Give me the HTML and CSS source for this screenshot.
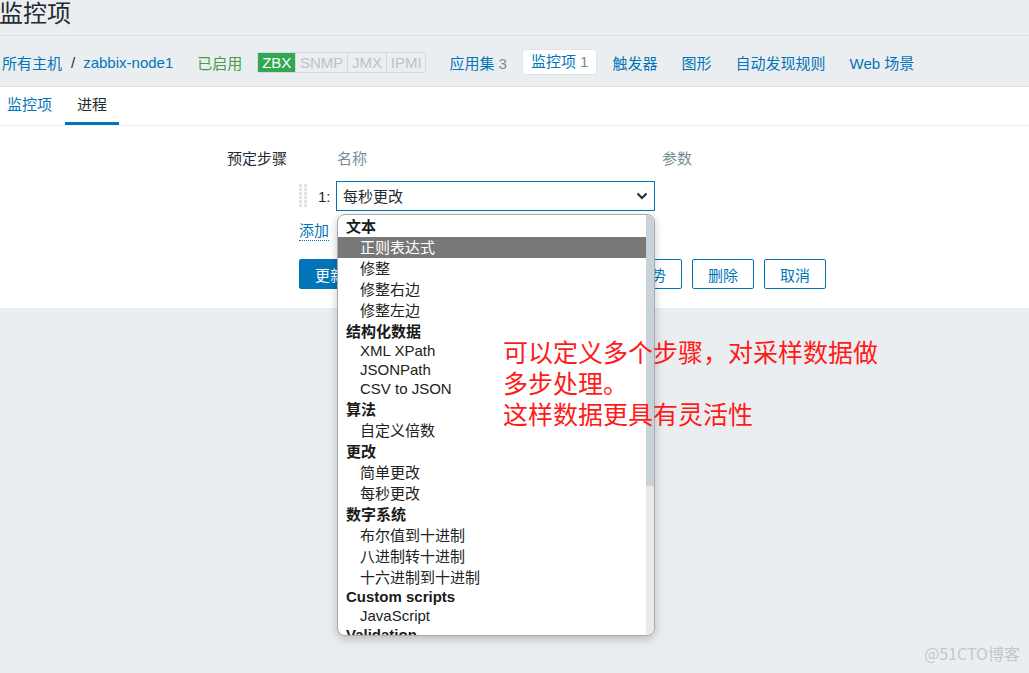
FILE: index.html
```html
<!DOCTYPE html>
<html lang="zh-CN">
<head>
<meta charset="utf-8">
<title>监控项</title>
<link rel="stylesheet" href="styles.css">
</head>
<body>
<header class="page-header"><h1 class="title">监控项</h1></header>
<nav class="host-nav">
  <a class="link">所有主机</a><span class="sep">/</span><a class="link">zabbix-node1</a>
  <span class="status">已启用</span>
  <span class="tags"><span class="tag on">ZBX</span><span class="tag">SNMP</span><span class="tag">JMX</span><span class="tag">IPMI</span></span>
  <a class="link apps">应用集 <span class="count">3</span></a>
  <span class="current"><a class="link">监控项</a> <span class="count">1</span></span>
  <a class="link after-current">触发器</a>
  <a class="link spaced">图形</a>
  <a class="link spaced">自动发现规则</a>
  <a class="link spaced">Web 场景</a>
</nav>
<main class="panel">
  <div class="tabs"><a class="tab">监控项</a><a class="tab active">进程</a></div>
  <div class="form">
    <div class="label">预定步骤</div>
    <div class="field">
      <div class="steps">
        <span></span><span></span><span class="col-head name">名称</span><span class="col-head params">参数</span>
        <span class="handle"><svg width="8" height="24" viewBox="0 0 8 24"><g fill="#dfe3e7"><rect x="0" y="0" width="3" height="3"/><rect x="5" y="0" width="3" height="3"/><rect x="0" y="4" width="3" height="3"/><rect x="5" y="4" width="3" height="3"/><rect x="0" y="8" width="3" height="3"/><rect x="5" y="8" width="3" height="3"/><rect x="0" y="12" width="3" height="3"/><rect x="5" y="12" width="3" height="3"/><rect x="0" y="16" width="3" height="3"/><rect x="5" y="16" width="3" height="3"/><rect x="0" y="20" width="3" height="3"/><rect x="5" y="20" width="3" height="3"/></g></svg></span>
        <span class="num">1:</span>
        <div class="select-wrap">
          <div class="select"><span>每秒更改</span><svg class="chev" width="12" height="8" viewBox="0 0 12 8"><polyline points="1.5,1.5 6,6 10.5,1.5" fill="none" stroke="#1f2c33" stroke-width="2"/></svg></div>
          <div class="dropdown">
            <div class="list">
              <div class="opt grp">文本</div>
              <div class="opt sel">正则表达式</div>
              <div class="opt">修整</div>
              <div class="opt">修整右边</div>
              <div class="opt">修整左边</div>
              <div class="opt grp">结构化数据</div>
              <div class="opt lat">XML XPath</div>
              <div class="opt lat">JSONPath</div>
              <div class="opt lat">CSV to JSON</div>
              <div class="opt grp">算法</div>
              <div class="opt">自定义倍数</div>
              <div class="opt grp">更改</div>
              <div class="opt">简单更改</div>
              <div class="opt">每秒更改</div>
              <div class="opt grp">数字系统</div>
              <div class="opt">布尔值到十进制</div>
              <div class="opt">八进制转十进制</div>
              <div class="opt">十六进制到十进制</div>
              <div class="opt grp lat">Custom scripts</div>
              <div class="opt lat">JavaScript</div>
              <div class="opt grp lat">Validation</div>
              <div class="opt lat">In range</div>
            </div>
            <div class="scrollbar"><div class="thumb"></div></div>
          </div>
        </div>
        <span></span>
      </div>
      <div class="add-row"><a class="add">添加</a></div>
      <div class="buttons">
        <button class="btn primary">更新</button>
        <button class="btn">克隆</button>
        <button class="btn">现在检查</button>
        <button class="btn">清除历史和趋势</button>
        <button class="btn">删除</button>
        <button class="btn">取消</button>
      </div>
    </div>
  </div>
</main>
<div class="annotation">可以定义多个步骤，对采样数据做<br>多步处理。<br>这样数据更具有灵活性</div>
<div class="watermark">@51CTO博客</div>
</body>
</html>
```

FILE: styles.css
```css
* { box-sizing: border-box; }
html, body { margin: 0; padding: 0; }
body {
  background: #ebeef1;
  font-family: "Liberation Sans", "Noto Sans CJK SC", sans-serif;
  font-size: 15px;
  color: #1f2c33;
  height: 673px;
  overflow: hidden;
  position: relative;
}
a { color: #0275b8; text-decoration: none; }

.page-header {
  height: 36px;
  border-bottom: 1px solid #dce1e5;
}
.title {
  margin: 0;
  font-size: 24px;
  font-weight: normal;
  line-height: 28px;
  color: #1f2c33;
  margin-left: -1px;
}

.host-nav {
  height: 51px;
  display: flex;
  align-items: center;
  padding-left: 2px;
  padding-top: 2px;
  border-bottom: 1px solid #dce1e5;
  white-space: nowrap;
}
.sep { margin: 0 8px 0 9px; color: #1f2c33; }
.status { color: #429e47; margin-left: 24px; }
.tags {
  display: flex;
  margin-left: 15px;
  border: 1px solid #d6dadd;
  border-radius: 2px;
  height: 21px;
}
.tag {
  padding: 0 3.85px;
  line-height: 19px;
  color: #bcc3c8;
  border-left: 1px solid #d6dadd;
}
.tag:first-child { border-left: 0; }
.tag.on { background: #33a852; color: #fff; }
.apps { margin-left: 23px; }
.count { color: #768d99; }
.current {
  margin-left: 15px;
  padding: 0 8px;
  height: 26px;
  line-height: 24px;
  background: #fff;
  border: 1px solid #dfe4e7;
  border-radius: 3px;
}
.after-current { margin-left: 15px; }
.spaced { margin-left: 24px; }

.panel {
  background: #fff;
}
.tabs {
  display: flex;
  height: 39px;
  border-bottom: 1px solid #ebeef1;
  margin-left: -6px;
}
.tab {
  padding: 0 13px;
  line-height: 36px;
  border-bottom: 3px solid transparent;
  color: #0275b8;
}
.tab.active { color: #1f2c33; border-bottom-color: #0275b8; padding: 0 12px 0 12px; }

.form {
  display: grid;
  grid-template-columns: 287px 1fr;
  column-gap: 12px;
  padding: 22px 0 19px;
}
.label {
  text-align: right;
  line-height: 22px;
}
.steps {
  display: grid;
  grid-template-columns: 19px 18px 319px 1fr;
  grid-template-rows: 22px 30px;
  row-gap: 11px;
  align-items: center;
}
.col-head { color: #768d99; line-height: 22px; }
.col-head.name { padding-left: 1px; }
.col-head.params { padding-left: 7px; }
.handle { display: flex; align-items: center; height: 30px; }
.handle svg { display: block; }
.num { color: #1f2c33; }
.select-wrap { position: relative; height: 30px; }
.select {
  height: 30px;
  border: 1px solid #0275b8;
  display: flex;
  align-items: center;
  justify-content: space-between;
  padding: 0 6px 1px 6px;
  color: #1f2c33;
}
.chev { display: block; }

.dropdown {
  position: absolute;
  left: 1px;
  top: 33px;
  width: 318px;
  height: 422px;
  background: #fff;
  border: 1px solid #a9a9a9;
  border-radius: 8px;
  box-shadow: 0 3px 10px rgba(0,0,0,0.22);
  display: flex;
  overflow: hidden;
  z-index: 5;
}
.list {
  flex: 1;
  padding-top: 1px;
  overflow: hidden;
}
.opt {
  height: 21px;
  line-height: 21px;
  padding-left: 22px;
  color: #222;
  white-space: nowrap;
}
.opt.lat { height: 19px; line-height: 18px; }
.opt.grp { padding-left: 8px; font-weight: bold; color: #1a1a1a; }
.opt.sel { background: #787878; color: #fff; }
.scrollbar {
  width: 8px;
  background: #e9e9e9;
}
.thumb {
  height: 271px;
  background: #c9d2d8;
}

.add-row { margin-top: 10px; height: 22px; }
.add {
  display: inline-block;
  line-height: 19px;
  border-bottom: 1px dotted #0275b8;
}
.buttons {
  margin-top: 16px;
  display: flex;
  gap: 10px;
}
.btn {
  height: 30px;
  padding: 0 15px;
  font: inherit;
  background: #fff;
  color: #0275b8;
  border: 1px solid #0275b8;
  border-radius: 2px;
  white-space: nowrap;
}
.btn.primary { background: #0275b8; color: #fff; }

.annotation {
  position: absolute;
  left: 503px;
  top: 336px;
  font-family: "Noto Sans CJK SC", sans-serif;
  font-size: 25px;
  line-height: 31px;
  color: #ff1a1a;
  z-index: 6;
}
.watermark {
  position: absolute;
  right: 9px;
  bottom: 8px;
  font-family: "Noto Sans CJK SC", sans-serif;
  font-size: 16px;
  color: #c3c7cb;
}
```
